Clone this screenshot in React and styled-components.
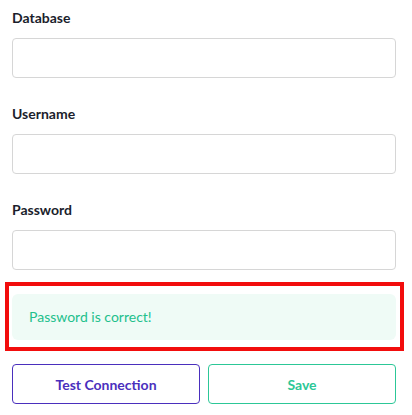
import React from "react";
import styled, { createGlobalStyle } from "styled-components";

const GlobalStyle = createGlobalStyle`
  body {
    margin: 0;
    background: #ffffff;
    font-family: Lato, "Open Sans", sans-serif;
  }
`;

const Form = styled.div`
  width: 384px;
  padding: 8px 16px 0 12px;
`;

const Field = styled.div`
  display: flex;
  flex-direction: column;
  gap: 10px;
  margin-bottom: ${(p) => (p.$last ? "12px" : "26px")};
`;

const Label = styled.label`
  font-size: 14px;
  line-height: 20px;
  font-weight: 700;
  color: #1b1e2c;
`;

const Input = styled.input`
  box-sizing: border-box;
  width: 100%;
  height: 40px;
  border: 1px solid #d6d6d6;
  border-radius: 4px;
  padding: 0 12px;
  font-family: inherit;
  font-size: 14px;
  outline: none;
`;

const Highlight = styled.div`
  border: 4px solid #f20d0d;
  margin: 0 -8px 0 -7px;
  padding: 8px 4px 7px 3px;
`;

const Alert = styled.div`
  background: #effbf6;
  border-radius: 6px;
  padding: 13px 17px;
  font-size: 14px;
  line-height: 20px;
  color: #22c08c;
`;

const Actions = styled.div`
  display: grid;
  grid-template-columns: 1fr 1fr;
  gap: 8px;
  margin-top: 13px;
`;

const Button = styled.button`
  height: 40px;
  background: #ffffff;
  border: 1px solid ${(p) => p.$color};
  border-radius: 4px;
  color: ${(p) => p.$color};
  font-family: inherit;
  font-size: 14px;
  font-weight: 700;
  cursor: pointer;
`;

export default function App() {
  return (
    <>
      <GlobalStyle />
      <Form>
        <Field>
          <Label>Database</Label>
          <Input />
        </Field>
        <Field>
          <Label>Username</Label>
          <Input />
        </Field>
        <Field $last>
          <Label>Password</Label>
          <Input type="password" />
        </Field>
        <Highlight>
          <Alert>Password is correct!</Alert>
        </Highlight>
        <Actions>
          <Button $color="#4a2fbd">Test Connection</Button>
          <Button $color="#2cc797">Save</Button>
        </Actions>
      </Form>
    </>
  );
}
